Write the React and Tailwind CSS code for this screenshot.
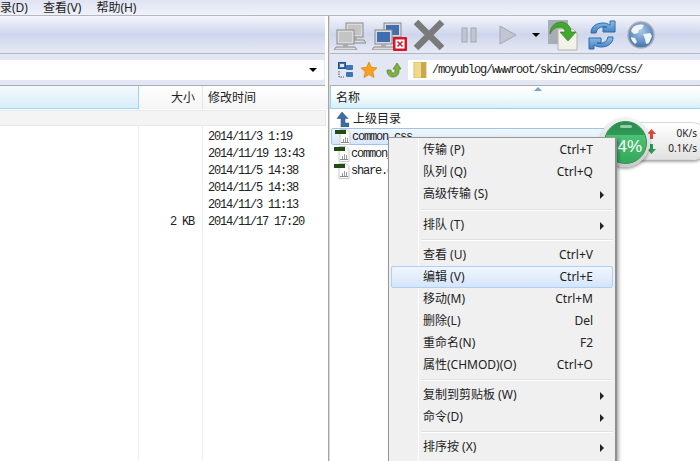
const cjk = 'font-["Noto_Sans","Noto_Sans_CJK_SC",sans-serif]';
const mono = 'font-["Liberation_Mono","Noto_Sans_CJK_SC",monospace]';

const dates = [
  ['', '2014/11/3 1:19'],
  ['', '2014/11/19 13:43'],
  ['', '2014/11/5 14:38'],
  ['', '2014/11/5 14:38'],
  ['', '2014/11/3 11:13'],
  ['2 KB', '2014/11/17 17:20'],
];

const menu = [
  { label: '传输 (P)', key: 'Ctrl+T' },
  { label: '队列 (Q)', key: 'Ctrl+Q' },
  { label: '高级传输 (S)', sub: true },
  { sep: 'h-[9px]' },
  { label: '排队 (T)', sub: true },
  { sep: 'h-[8px]' },
  { label: '查看 (U)', key: 'Ctrl+V' },
  { label: '编辑 (V)', key: 'Ctrl+E', active: true },
  { label: '移动(M)', key: 'Ctrl+M' },
  { label: '删除(L)', key: 'Del' },
  { label: '重命名(N)', key: 'F2' },
  { label: '属性(CHMOD)(O)', key: 'Ctrl+O' },
  { sep: 'h-[8px]' },
  { label: '复制到剪贴板 (W)', sub: true },
  { label: '命令(D)', sub: true },
  { sep: 'h-[8px]' },
  { label: '排序按 (X)', sub: true },
];

const Computer = ({ x, y, screen, body }) => (
  <g transform={`translate(${x} ${y})`}>
    <rect x="0" y="0" width="17" height="14" fill={body} stroke="#8a8a8a" />
    <rect x="2" y="2" width="13" height="10" fill={screen} />
    <path d="M-1 17h19l2 3H-3z" fill={body} stroke="#8a8a8a" />
    <rect x="6" y="14" width="5" height="3" fill="#aaa" />
  </g>
);

const Computers = ({ screen, body }) => (
  <svg width="32" height="30" viewBox="0 0 32 30">
    <Computer x={12} y={3} screen={screen} body={body} />
    <Computer x={3} y={10} screen={screen} body={body} />
  </svg>
);

const DocIcon = () => (
  <svg width="16" height="16" viewBox="0 0 16 16" className="shrink-0">
    <path d="M5 .5h7l3 3v12H5z" fill="#fff" stroke="#c8c8c8" />
    <rect x="0" y="1" width="11" height="4" fill="#1f4d12" />
    <path d="M8 13v-3h1v3zm2 0V8h1v5zm2 0v-4h1v4z" fill="#9a9a9a" />
    <rect x="6" y="13" width="8" height="1" fill="#8a8a8a" />
  </svg>
);

const UpArrow = () => (
  <svg width="13" height="15" viewBox="0 0 13 15" className="shrink-0">
    <path d="M6 0l6 6.5H9V11h4v4H5V6.5H1z" fill="#3b6ea5" stroke="#26507f" strokeWidth=".5" />
  </svg>
);

const SmallArrow = ({ color, down }) => (
  <svg width="9" height="10" viewBox="0 0 9 10" className={down ? 'rotate-180' : ''}>
    <path d="M4.5 0L9 5H6v5H3V5H0z" fill={color} />
  </svg>
);

function Menu() {
  return (
    <div className={`absolute left-[388px] top-[137px] w-[229px] h-[340px] bg-[#f0f0f0] border border-[#979797] border-r-2 border-r-[#8f8f8f] shadow-[2px_2px_3px_rgba(0,0,0,0.3)] py-px px-0.5 text-[12px] text-[#222] ${cjk}`}>
      <div className="absolute left-[29px] top-0 bottom-0 w-px bg-[#e2e3e3] border-r border-white" />
      {menu.map((m, i) =>
        m.sep ? (
          <div key={i} className={`${m.sep} flex items-center pl-[30px]`}>
            <div className="w-full h-[2px] bg-[#e0e0e0] border-b border-white" />
          </div>
        ) : (
          <div
            key={i}
            className={`relative h-[22px] flex items-center pl-[31px] pr-[19px] rounded-[2px] border ${m.active ? 'border-[#aecff7] bg-gradient-to-b from-[#f1f6fd] to-[#d5e5fa]' : 'border-transparent'}`}
          >
            <span className="flex-1 whitespace-nowrap">{m.label}</span>
            {m.key && <span>{m.key}</span>}
            {m.sub && <span className="absolute right-[8px] top-[7px] w-0 h-0 border-y-[4px] border-y-transparent border-l-[4px] border-l-[#222]" />}
          </div>
        )
      )}
    </div>
  );
}

function Gauge() {
  return (
    <div className="absolute left-[600px] top-[117px] w-[100px] h-[50px]">
      <div className={`absolute left-[24px] right-[-10px] top-[5px] h-[38px] rounded-[18px] bg-gradient-to-b from-white to-[#e2e2e2] shadow-[0_2px_3px_rgba(0,0,0,0.35)] border border-[#d8d8d8] text-[10px] text-[#222] ${cjk}`}>
        <div className="flex flex-col pl-[22px] pr-[12px] pt-[3px] leading-[15px]">
          <div className="flex items-center justify-between">
            <SmallArrow color="#d9483b" />
            <span>0K/s</span>
          </div>
          <div className="flex items-center justify-between">
            <SmallArrow color="#2c9a55" down />
            <span>0.1K/s</span>
          </div>
        </div>
      </div>
      <div className="absolute left-0 top-0 w-[50px] h-[50px] rounded-full bg-gradient-to-b from-[#f4f4f4] to-[#c9c9c9] shadow-[0_2px_3px_rgba(0,0,0,0.35)] flex items-center justify-center">
        <div className="relative w-[43px] h-[43px] rounded-full overflow-hidden flex flex-col bg-[#3db765] border border-[#2f8c50]">
          <div className="h-[13px] bg-gradient-to-b from-[#2c8a4e] to-[#2f9a58]" />
          <div className="absolute left-[15px] top-[3px] w-[12px] h-[3px] rounded-full bg-[#8fd0a4]" />
          <div className="flex-1 bg-gradient-to-b from-[#4cc274] to-[#33a85c] text-white text-[17px] leading-[24px] text-center font-['Liberation_Sans',sans-serif]">
            74%
          </div>
        </div>
      </div>
    </div>
  );
}

export default function App() {
  return (
    <div className={`relative w-[700px] h-[461px] overflow-hidden bg-white ${cjk}`}>
      {/* menu bar */}
      <div className="h-[16px] bg-gradient-to-b from-[#dfe3f2] to-[#f0f2fa] border-b border-[#b4b7c0] flex items-center gap-[15px] text-[12px] text-[#222] overflow-hidden">
        <span className="whitespace-nowrap">录(D)</span>
        <span className="whitespace-nowrap">查看(V)</span>
        <span className="whitespace-nowrap">帮助(H)</span>
      </div>

      <div className="flex h-[445px]">
        {/* left pane */}
        <div className="w-[328px] shrink-0 flex flex-col">
          <div className="h-[38px] mr-[3px] bg-gradient-to-b from-[#f3f5fb] via-[#cfd6ec] to-[#e6e9f5] border-b border-[#b4b7c0]" />
          <div className="h-[32px] mr-[3px] bg-[#e3e6f3] border-b border-[#a9acb5] flex items-start pt-[6px]">
            <div className="w-[324px] h-[20px] bg-white flex items-center justify-end pr-[7px] rounded-r-[2px]">
              <span className="w-0 h-0 border-x-[4px] border-x-transparent border-t-[4px] border-t-black" />
            </div>
          </div>
          <div className="h-[23px] flex text-[12px] text-[#222] leading-[24px]">
            <div className="w-[139px] bg-gradient-to-b from-[#f4fafe] to-[#d7eef8] border-b border-r border-[#9cd4ef]" />
            <div className="w-[64px] pr-[7px] text-right bg-gradient-to-b from-white to-[#f4f4f4] border-r border-[#e6e6e6]">大小</div>
            <div className="flex-1 pl-[5px] bg-gradient-to-b from-white to-[#f4f4f4]">修改时间</div>
          </div>
          <div className="flex flex-1 relative">
            <div className="absolute left-0 right-0 top-[1px] h-[16px] mr-[2px] bg-[#f4f4f4] border-y border-r border-[#e8e8e8]" />
            <div className="w-[139px] border-r border-[#eeeeee]" />
            <div className={`w-[64px] border-r border-[#eeeeee] pt-[20px] ${mono}`}>
              {dates.map((d, i) => (
                <div key={i} className="h-[17px] pr-[8px] text-right text-[12px] tracking-[-1.2px] leading-[17px] text-[#222]">{d[0]}</div>
              ))}
            </div>
            <div className={`flex-1 pl-[5px] pt-[20px] ${mono}`}>
              {dates.map((d, i) => (
                <div key={i} className="h-[17px] text-[12px] tracking-[-1.2px] leading-[17px] text-[#222] whitespace-nowrap">{d[1]}</div>
              ))}
            </div>
          </div>
        </div>

        <div className="w-[2px] bg-[#a5a5a5] border-r border-[#d8d8d8]" />

        {/* right pane */}
        <div className="flex-1 flex flex-col min-w-0">
          <div className="h-[38px] bg-gradient-to-b from-[#f3f5fb] via-[#cfd6ec] to-[#e6e9f5] border-b border-[#b4b7c0] flex items-center">
            <div className="ml-[4px]"><Computers screen="#c4c4c4" body="#dcdcdc" /></div>
            <div className="ml-[6px] relative">
              <Computers screen="#3f6fb0" body="#dadada" />
              <svg width="14" height="14" viewBox="0 0 14 14" className="absolute right-[-3px] bottom-[-1px]">
                <rect width="14" height="14" rx="1" fill="#d8142a" />
                <rect x="2.5" y="2.5" width="9" height="9" fill="#fff" />
                <path d="M4.5 4.5l5 5m0-5l-5 5" stroke="#d8142a" strokeWidth="1.6" />
              </svg>
            </div>
            <svg width="32" height="32" viewBox="0 0 32 32" className="ml-[9px]">
              <path d="M3 3l26 26M29 3L3 29" stroke="#7a7a7a" strokeWidth="6.5" />
            </svg>
            <svg width="16" height="16" viewBox="0 0 16 16" className="ml-[16px]">
              <rect x="1" y="1" width="5" height="14" fill="#c2c6d2" stroke="#a4a7b0" />
              <rect x="10" y="1" width="5" height="14" fill="#c2c6d2" stroke="#a4a7b0" />
            </svg>
            <svg width="18" height="20" viewBox="0 0 18 20" className="ml-[22px]">
              <path d="M1 1l16 9-16 9z" fill="#c2c6d2" stroke="#a4a7b0" />
            </svg>
            <span className="ml-[15px] w-0 h-0 border-x-[4px] border-x-transparent border-t-[4px] border-t-black" />
            <svg width="32" height="34" viewBox="0 0 32 34" className="ml-[7px]">
              <rect x="1" y="2" width="20" height="24" fill="#a9adb8" />
              <path d="M11 11h15l4 4v17H11z" fill="#f2f2ea" stroke="#b5b5aa" />
              <path d="M3 16C3 6 13 1 20 6c3 2 4 5 4 8h5l-8 9-8-9h5c0-3-2-5-5-5-5 0-8 3-10 7z" fill="#43a82f" stroke="#2f7f20" strokeWidth=".7" />
            </svg>
            <svg width="28" height="30" viewBox="0 0 28 30" className="ml-[9px]">
              <defs>
                <linearGradient id="refreshFill" x1="0" y1="0" x2="0" y2="1">
                  <stop offset="0" stopColor="#8fbde8" />
                  <stop offset="1" stopColor="#3f7fc2" />
                </linearGradient>
              </defs>
              <path d="M3 13C3 6 9 3 15 3c3 0 5 1 7 2V1l5 0v11H15V7h4c-4-1-10 0-11 6z" fill="url(#refreshFill)" stroke="#2d6aa8" />
              <path d="M25 17c0 7-6 10-12 10-3 0-5-1-7-2v4H1V18h12v5H9c4 1 10 0 11-6z" fill="url(#refreshFill)" stroke="#2d6aa8" />
            </svg>
            <svg width="28" height="28" viewBox="0 0 28 28" className="ml-[11px]">
              <defs>
                <radialGradient id="globeFill" cx=".5" cy=".35" r=".7">
                  <stop offset="0" stopColor="#a9c8ea" />
                  <stop offset="1" stopColor="#356aa8" />
                </radialGradient>
              </defs>
              <circle cx="14" cy="14" r="13" fill="url(#globeFill)" stroke="#a8acb4" strokeWidth="1.5" />
              <path d="M6 6c4-3 9-3 11-2l-2 4-3 1-1 3-4 1-3-3zM16 13l7-1 2 3-3 7-3 1-1-5zM4 16l4 1 2 4-2 2c-2-2-4-4-4-7z" fill="#f2f4f8" />
            </svg>
          </div>

          <div className="h-[32px] bg-[#e3e6f3] border-b border-[#a9acb5] flex items-center">
            <svg width="16" height="16" viewBox="0 0 16 16" className="ml-[8px]">
              <rect x=".5" y=".5" width="7" height="6" fill="#3d74b4" stroke="#234f83" />
              <rect x="2" y="2" width="4" height="3" fill="#dbe7f5" />
              <rect x="8" y="3" width="7" height="5" rx="1" fill="#3d74b4" />
              <rect x="8" y="10" width="7" height="5" rx="1" fill="#3d74b4" />
              <path d="M1 9v6h5" fill="none" stroke="#555" strokeDasharray="1.5 1" />
            </svg>
            <svg width="18" height="18" viewBox="0 0 18 18" className="ml-[6px]">
              <path d="M9 1l2.4 5.3 5.6.6-4.2 3.8 1.2 5.8L9 13.6l-5 2.9 1.2-5.8L1 6.9l5.6-.6z" fill="#f6a21c" stroke="#d97f10" strokeWidth=".7" />
            </svg>
            <svg width="18" height="18" viewBox="0 0 18 18" className="ml-[6px]">
              <path d="M3 9c0 4 2 7 6 7s6-3 6-6V8h2l-4-6-4 6h2v2c0 1-1 2-2 2s-2-1-2-3z" fill="#7fb23f" stroke="#4f7d25" strokeWidth=".7" />
            </svg>
            <div className={`ml-[6px] flex-1 h-[20px] bg-white flex items-center ${mono}`}>
              <svg width="14" height="16" viewBox="0 0 14 16" className="ml-[5px]">
                <rect x="1" y="0" width="12" height="16" fill="#f0d98a" stroke="#d8bd63" />
                <rect x="8" y="0" width="5" height="16" fill="#c9a94d" />
              </svg>
              <span className="ml-[5px] text-[12px] tracking-[-1.2px] text-[#222] whitespace-nowrap">/moyublog/wwwroot/skin/ecms009/css/</span>
            </div>
          </div>

          <div className="relative h-[23px] bg-gradient-to-b from-white via-[#f2fafd] to-[#d7eef8] border-b border-[#9cd4ef] border-l text-[12px] text-[#222] leading-[24px] pl-[5px]">
            名称
            <span className="absolute left-[203px] top-[1px] w-0 h-0 border-x-[4px] border-x-transparent border-b-[4px] border-b-[#6fa6c9]" />
          </div>

          <div className="flex-1 pl-[5px] pt-px">
            <div className="h-[18px] flex items-center gap-[4px] text-[12px] text-[#222] pl-[1px]">
              <UpArrow />
              上级目录
            </div>
            <div className={`h-[17px] -ml-[4px] mr-[90px] pl-[3px] flex items-center gap-[1px] text-[12px] tracking-[-1.2px] text-[#222] border border-[#9fc3ea] rounded-[2px] bg-gradient-to-b from-[#f2f7fd] to-[#d6e6fa] ${mono}`}>
              <DocIcon /> common.css
            </div>
            <div className={`h-[17px] -ml-[1px] flex items-center gap-[1px] text-[12px] tracking-[-1.2px] text-[#222] ${mono}`}>
              <DocIcon /> common_m.css
            </div>
            <div className={`h-[17px] -ml-[1px] flex items-center gap-[1px] text-[12px] tracking-[-1.2px] text-[#222] ${mono}`}>
              <DocIcon /> share.css
            </div>
          </div>
        </div>
      </div>

      <Gauge />
      <Menu />
    </div>
  );
}
